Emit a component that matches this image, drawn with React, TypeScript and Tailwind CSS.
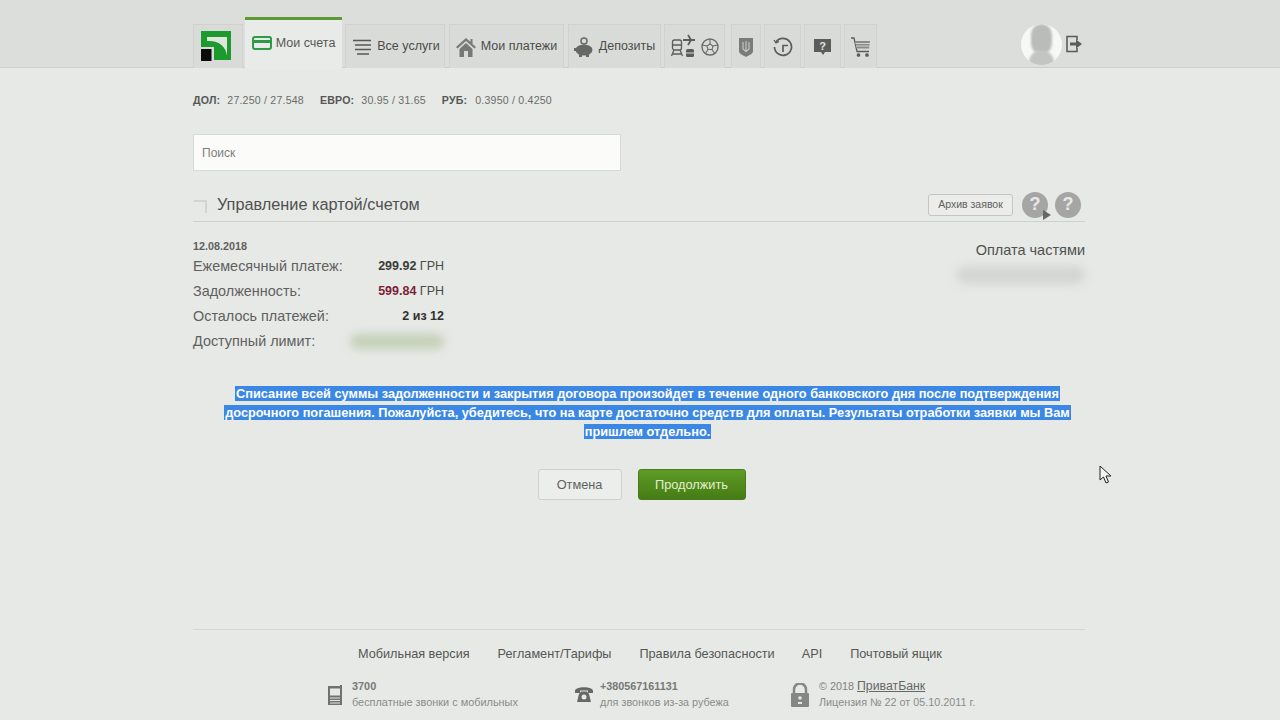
const font = { fontFamily: '"Liberation Sans", Arial, sans-serif' };

const Logo = () => (
  <svg width="30" height="30" viewBox="0 0 30 30" className="mr-[4px] mt-[-1px]">
    <rect width="30" height="29" fill="#1c9a2e" />
    <path d="M6 6 H26 V25 C25 15 17 9 6 10 Z" fill="#dfe6dc" />
    <rect x="0" y="16" width="13" height="14" fill="#d9dbd8" />
    <rect x="0" y="18" width="10.500" height="12" fill="#0b0b0b" />
  </svg>
);

const Tab = ({ w, children }: { w: string; children: React.ReactNode }) => (
  <div className={`${w} h-[44px] flex items-center justify-center gap-[5px] bg-[#d9dbd8] border border-b-0 border-[#d0d2cf] text-[13px] text-[#4a4c4a]`}>
    {children}
  </div>
);

const Row = ({ label, children }: { label: string; children: React.ReactNode }) => (
  <div className="flex items-center justify-between h-[25px] w-[251px]">
    <span className="text-[14.400px] text-[#5f615f]">{label}</span>
    {children}
  </div>
);

const Help = ({ play }: { play?: boolean }) => (
  <div className="relative w-[26px] h-[26px] rounded-full bg-[#a5a6a4] flex items-center justify-center text-[18px] font-bold text-[#e8e9e6]">
    ?
    {play && <div className="absolute right-[-3px] bottom-[-2px] w-0 h-0 border-y-[5px] border-y-transparent border-l-[8px] border-l-[#666866]" />}
  </div>
);

export default function App() {
  return (
    <div className="w-[1280px] h-[720px] overflow-hidden bg-[#e7e9e6] text-[#4a4c4a]" style={font}>
      {/* Header */}
      <header className="h-[68px] bg-[#dcdedb] border-b border-[#cdcfcc]">
        <div className="w-[892px] ml-[193px] h-[68px] flex items-end">
          <nav className="flex items-end gap-[3px]">
            <Tab w="w-[50px] mr-[-1px]"><Logo /></Tab>
            <div className="w-[97px] h-[52px] mb-[-1px] flex items-center justify-center gap-[4px] bg-[#e9ebe8] border-t-[3px] border-[#5c9a34] text-[12.500px] text-[#555755] pb-[3px]">
              <svg width="20" height="14" viewBox="0 0 20 14" fill="none" stroke="#2f9a45" strokeWidth="2">
                <rect x="1" y="1" width="18" height="12" rx="2" />
                <path d="M1 5.500 H19" strokeWidth="3" />
              </svg>
              Мои счета
            </div>
            <Tab w="w-[100px] mr-[1px] pl-[3px]">
              <svg width="18" height="16" viewBox="0 0 18 16" stroke="#555755" strokeWidth="1.600" className="mr-[1px]">
                <path d="M0 1.500 H18 M2 6 H18 M2 10.500 H18 M4 15 H16" />
              </svg>
              <span className="text-[12.500px]">Все услуги</span>
            </Tab>
            <Tab w="w-[115px] mr-[1px]">
              <svg width="20" height="20" viewBox="0 0 20 20" fill="#777977">
                <path d="M10 1 L0 10 L1.500 11.500 L10 4 L18.500 11.500 L20 10 L16.500 7 V2 H14.500 V5 Z" />
                <path d="M3.500 12 L10 6 L16.500 12 V20 H12 V14 H8 V20 H3.500 Z" />
              </svg>
              <span className="text-[12.500px]">Мои платежи</span>
            </Tab>
            <Tab w="w-[93px]">
              <svg width="20" height="20" viewBox="0 0 20 20" fill="#666866">
                <circle cx="10" cy="4" r="3" fill="none" stroke="#666866" strokeWidth="1.500" />
                <ellipse cx="10" cy="13" rx="8.500" ry="5.500" />
                <rect x="5" y="16" width="3" height="4" />
                <rect x="12" y="16" width="3" height="4" />
                <rect x="0" y="11" width="3" height="3" />
              </svg>
              <span className="text-[12.500px]">Депозиты</span>
            </Tab>
            <Tab w="w-[61px] mr-[3px]">
              <svg width="25" height="25" viewBox="0 0 25 25" fill="none" stroke="#5b5d5b" strokeWidth="1.300">
                <rect x="1.500" y="6" width="9" height="10" rx="2" />
                <path d="M1.500 11 H10.500 M3 16 L0.500 22 M9 16 L11.500 22 M2 20 H10" />
                <path d="M12 6 H24 M17 1 L20 6 L17 11" strokeWidth="1.800" />
                <rect x="15" y="15" width="8" height="8" rx="1.500" fill="#5b5d5b" stroke="none" />
                <path d="M15 19 H23" stroke="#d9dbd8" strokeWidth="1" />
              </svg>
              <svg width="18" height="18" viewBox="0 0 18 18" fill="none" stroke="#6a6c6a" strokeWidth="1.100">
                <circle cx="9" cy="9" r="8" strokeWidth="1.400" />
                <path d="M9 6 L12 8 L11 11.500 H7 L6 8 Z" />
                <path d="M9 1 V6 M12 8 L17 7 M11 11.500 L14 16 M7 11.500 L4 16 M6 8 L1 7" />
              </svg>
            </Tab>
            <Tab w="w-[30px]">
              <svg width="14" height="20" viewBox="0 0 14 20" fill="#7a7c7a">
                <path d="M0 1 H14 V14 C14 17 10 18 7 20 C4 18 0 17 0 14 Z" />
                <path d="M7 4 V14 M4 5 V12 L7 14.500 L10 12 V5" fill="none" stroke="#c9cbc8" strokeWidth="1.100" />
              </svg>
            </Tab>
            <Tab w="w-[37px]">
              <svg width="20" height="20" viewBox="0 0 20 20" fill="none" stroke="#5b5d5b" strokeWidth="1.700">
                <path d="M3 5 A8.500 8.500 0 1 1 1.500 10" />
                <path d="M1 3 L3 6 L6 4.500" strokeWidth="1.300" />
                <path d="M10 15 V8.500 H15" />
              </svg>
            </Tab>
            <Tab w="w-[37px]">
              <svg width="19" height="18" viewBox="0 0 19 18" fill="#5b5d5b">
                <path d="M1 1 H18 V14 H12 L10 17 L8 14 H1 Z" />
                <text x="9.500" y="11.500" textAnchor="middle" fontSize="11" fontWeight="700" fill="#e2e3e0" style={font}>?</text>
              </svg>
            </Tab>
            <Tab w="w-[33px]">
              <svg width="20" height="20" viewBox="0 0 20 20" fill="none" stroke="#5b5d5b" strokeWidth="1.300">
                <path d="M0 1 H3 L6 14.500 H18" />
                <path d="M4 4 H19 L18 11.500 H5.500 Z" fill="#8a8c8a" stroke="none" />
                <path d="M4.500 6.500 H19 M5 9 H18.500" stroke="#d9dbd8" strokeWidth="0.900" />
                <circle cx="7.500" cy="18" r="1.200" fill="#5b5d5b" />
                <circle cx="16" cy="18" r="1.200" fill="#5b5d5b" />
              </svg>
            </Tab>
          </nav>
          <div className="ml-auto h-[68px] flex items-center gap-[4px] pr-[2px] pt-[20px]">
            <div className="relative w-[41px] h-[41px] rounded-full bg-[#f7f8f6] overflow-hidden">
              <div className="absolute left-[10px] top-[0px] w-[21px] h-[30px] rounded-full bg-[#b9bcb8] blur-[1px]" />
              <div className="absolute left-[8px] top-[26px] w-[25px] h-[20px] rounded-t-full bg-[#c2c5c1] blur-[1px]" />
            </div>
            <svg width="17" height="18" viewBox="0 0 17 18" fill="none" stroke="#5b5d5b" strokeWidth="1.600">
              <path d="M11 5 V1.500 H1 V16.500 H11 V13" />
              <path d="M4 7.500 H10 V4.500 L16 9 L10 13.500 V10.500 H4 Z" fill="#5b5d5b" stroke="none" />
            </svg>
          </div>
        </div>
      </header>

      <main className="w-[892px] ml-[193px]">
        {/* Rates */}
        <div className="h-[13px] mt-[26px] flex items-center text-[10.600px] text-[#6a6c6a] tracking-[0.2px]">
          <b className="text-[#555755] mr-[7px]">ДОЛ:</b>
          <span className="mr-[16px]">27.250 / 27.548</span>
          <b className="text-[#555755] mr-[7px]">ЕВРО:</b>
          <span className="mr-[16px]">30.95 / 31.65</span>
          <b className="text-[#555755] mr-[8px]">РУБ:</b>
          <span>0.3950 / 0.4250</span>
        </div>

        {/* Search */}
        <div className="mt-[27px] w-[428px] h-[37px] bg-[#fbfbfa] border border-[#d8dad7] flex items-center pl-[8px] text-[12px] text-[#7d7f7d]">
          Поиск
        </div>

        {/* Title */}
        <div className="mt-[19px] h-[32px] pb-[2px] flex items-center border-b border-[#cfd1ce]">
          <svg width="16" height="16" viewBox="0 0 16 16" fill="none" stroke="#d2d4d1" strokeWidth="2" className="mr-[8px] mt-[3px]">
            <path d="M1 3 H13 V15" />
          </svg>
          <h1 className="text-[16.300px] text-[#4f514f]">Управление картой/счетом</h1>
          <div className="ml-auto flex items-center gap-[7px] pr-[4px]">
            <div className="w-[85px] h-[22px] mr-[2px] flex items-center justify-center border border-[#c4c6c3] rounded-[3px] text-[10.500px] text-[#5f615f] bg-[#ecedea]">
              Архив заявок
            </div>
            <Help play />
            <Help />
          </div>
        </div>

        {/* Details */}
        <div className="flex justify-between mt-[17px]">
          <div>
            <div className="h-[15px] text-[10.800px] font-bold text-[#5f615f] flex items-center">12.08.2018</div>
            <Row label="Ежемесячный платеж:">
              <span className="text-[12.500px]"><b className="text-[#3a3c3a]">299.92</b> ГРН</span>
            </Row>
            <Row label="Задолженность:">
              <span className="text-[12.500px]"><b className="text-[#7c1f35]">599.84</b> ГРН</span>
            </Row>
            <Row label="Осталось платежей:">
              <b className="text-[12.500px] text-[#2f312f]">2 из 12</b>
            </Row>
            <Row label="Доступный лимит:">
              <div className="w-[94px] h-[15px] rounded-full bg-[#c3d0b8] blur-[5px]" />
            </Row>
          </div>
          <div className="flex flex-col items-end pt-[1px]">
            <span className="text-[14.500px] text-[#4f514f]">Оплата частями</span>
            <div className="mt-[4px] w-[128px] h-[18px] rounded-full bg-[#d3d5d2] blur-[5px]" />
          </div>
        </div>

        {/* Selected notice */}
        <p className="mt-[30px] pl-[17px] text-center text-[12.750px] font-bold leading-[19px] text-white">
          <span className="bg-[#3b87e6] px-[1px]">Списание всей суммы задолженности и закрытия договора произойдет в течение одного банковского дня после подтверждения</span>
          <br />
          <span className="bg-[#3b87e6] px-[1px]">досрочного погашения. Пожалуйста, убедитесь, что на карте достаточно средств для оплаты. Результаты отработки заявки мы Вам</span>
          <br />
          <span className="bg-[#3b87e6] px-[1px]">пришлем отдельно.</span>
        </p>

        {/* Buttons */}
        <div className="mt-[28px] flex justify-center gap-[16px] pl-[5px]">
          <div className="w-[84px] h-[31px] flex items-center justify-center border border-[#cfd1ce] rounded-[3px] bg-[#eceeeb] text-[12.750px] text-[#5f615f]">
            Отмена
          </div>
          <div className="w-[108px] h-[31px] flex items-center justify-center rounded-[3px] bg-gradient-to-b from-[#5f9c25] to-[#457c14] text-[12.750px] text-[#e3f0cf] border border-[#4a7a20]">
            Продолжить
          </div>
        </div>

        {/* Footer */}
        <footer className="mt-[129px] border-t border-[#d4d6d3]">
          <div className="mt-[17px] h-[15px] flex items-center gap-[28px] pl-[165px] text-[12.700px] text-[#555755]">
            <span>Мобильная версия</span>
            <span>Регламент/Тарифы</span>
            <span>Правила безопасности</span>
            <span className="ml-[-1px]">API</span>
            <span>Почтовый ящик</span>
          </div>
          <div className="mt-[18px] flex pl-[135px]">
            <div className="w-[247px] flex items-center gap-[10px]">
              <svg width="14" height="20" viewBox="0 0 14 20" fill="#707270">
                <path d="M0 1 H12 V0 H14 V20 H0 Z" />
                <rect x="2" y="3.500" width="10" height="7" fill="#e7e9e6" />
                <path d="M2 13 H12 M2 15.500 H12 M2 18 H12" stroke="#e7e9e6" strokeWidth="1" />
              </svg>
              <div className="flex flex-col gap-[3px] text-[10.900px] leading-[13px] text-[#8a8c8a]">
                <b className="font-bold text-[#777977]">3700</b>
                <span>бесплатные звонки с мобильных</span>
              </div>
            </div>
            <div className="w-[215px] flex items-center gap-[7px]">
              <svg width="18" height="17" viewBox="0 0 18 17" fill="#666866">
                <path d="M0 5 C0 0 18 0 18 5 V7 H13 V4.500 H5 V7 H0 Z" />
                <path d="M4 8 L6 5.500 H12 L14 8 L16 16 H2 Z" />
                <circle cx="9" cy="11" r="2.500" fill="#e7e9e6" />
              </svg>
              <div className="flex flex-col gap-[3px] text-[10.800px] leading-[13px] text-[#8a8c8a]">
                <b className="font-bold text-[#777977]">+380567161131</b>
                <span>для звонков из-за рубежа</span>
              </div>
            </div>
            <div className="flex items-center gap-[9px]">
              <svg width="20" height="24" viewBox="0 0 20 24" fill="#858785">
                <path d="M4 10 V6.500 A6 6 0 0 1 16 6.500 V10" fill="none" stroke="#858785" strokeWidth="2.500" />
                <rect x="1" y="10" width="18" height="14" rx="1" />
                <circle cx="10" cy="15" r="1.800" fill="#e7e9e6" />
                <rect x="8" y="19" width="4" height="2" fill="#e7e9e6" />
              </svg>
              <div className="flex flex-col gap-[3px] text-[10.800px] leading-[13px] text-[#8a8c8a]">
                <span className="text-[#808280]">© 2018 <span className="underline text-[12.300px] text-[#666866]">ПриватБанк</span></span>
                <span>Лицензия № 22 от 05.10.2011 г.</span>
              </div>
            </div>
          </div>
        </footer>
      </main>

      {/* Mouse cursor */}
      <svg className="absolute left-[1099px] top-[465px]" width="13" height="19" viewBox="0 0 13 19" fill="#f4f4f4" stroke="#222" strokeWidth="1">
        <path d="M1 1 V15 L4.500 12 L7 18 L9.500 17 L7 11 H12 Z" />
      </svg>
    </div>
  );
}
